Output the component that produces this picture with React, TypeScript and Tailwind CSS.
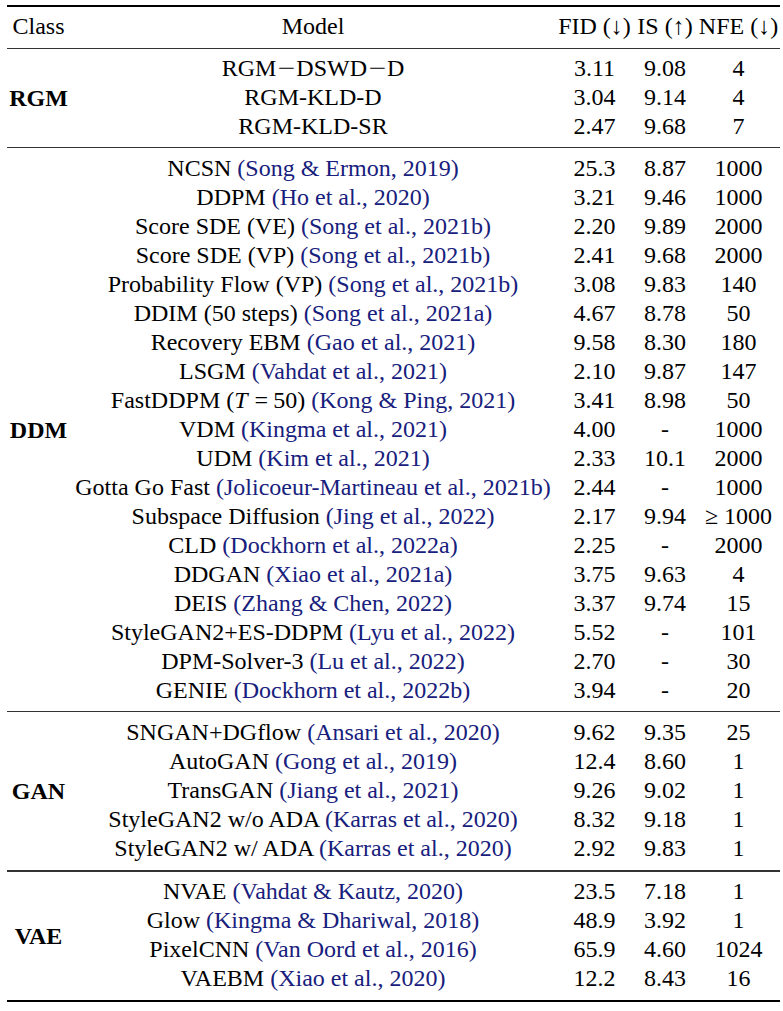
import React from "react";

type Row = { m: React.ReactNode; c?: string; fid: string; is: string; nfe: string };

const Cite = ({ children }: { children: React.ReactNode }) => (
  <span className="text-[#17207c]">({children})</span>
);

const Minus = () => (
  <span className="inline-block w-[17px] mx-[1.5px] text-center scale-x-[1.3]">{"\u2212"}</span>
);

const sections: { label: string; py: string; rowH: string; rows: Row[] }[] = [
  {
    label: "RGM",
    py: "py-[5.5px]",
    rowH: "h-[29px]",
    rows: [
      {
        m: (
          <>
            RGM
            <Minus />
            DSWD
            <Minus />D
          </>
        ),
        fid: "3.11",
        is: "9.08",
        nfe: "4",
      },
      { m: "RGM-KLD-D", fid: "3.04", is: "9.14", nfe: "4" },
      { m: "RGM-KLD-SR", fid: "2.47", is: "9.68", nfe: "7" },
    ],
  },
  {
    label: "DDM",
    py: "py-[6px]",
    rowH: "h-[29px]",
    rows: [
      { m: "NCSN", c: "Song & Ermon, 2019", fid: "25.3", is: "8.87", nfe: "1000" },
      { m: "DDPM", c: "Ho et al., 2020", fid: "3.21", is: "9.46", nfe: "1000" },
      { m: "Score SDE (VE)", c: "Song et al., 2021b", fid: "2.20", is: "9.89", nfe: "2000" },
      { m: "Score SDE (VP)", c: "Song et al., 2021b", fid: "2.41", is: "9.68", nfe: "2000" },
      { m: "Probability Flow (VP)", c: "Song et al., 2021b", fid: "3.08", is: "9.83", nfe: "140" },
      { m: "DDIM (50 steps)", c: "Song et al., 2021a", fid: "4.67", is: "8.78", nfe: "50" },
      { m: "Recovery EBM", c: "Gao et al., 2021", fid: "9.58", is: "8.30", nfe: "180" },
      { m: "LSGM", c: "Vahdat et al., 2021", fid: "2.10", is: "9.87", nfe: "147" },
      {
        m: (
          <>
            FastDDPM (<i className="pr-[2px]">T</i>
            <span className="inline-block mx-[5px]">=</span>50)
          </>
        ),
        c: "Kong & Ping, 2021",
        fid: "3.41",
        is: "8.98",
        nfe: "50",
      },
      { m: "VDM", c: "Kingma et al., 2021", fid: "4.00", is: "-", nfe: "1000" },
      { m: "UDM", c: "Kim et al., 2021", fid: "2.33", is: "10.1", nfe: "2000" },
      { m: "Gotta Go Fast", c: "Jolicoeur-Martineau et al., 2021b", fid: "2.44", is: "-", nfe: "1000" },
      {
        m: "Subspace Diffusion",
        c: "Jing et al., 2022",
        fid: "2.17",
        is: "9.94",
        nfe: "\u2265\u00a01000",
      },
      { m: "CLD", c: "Dockhorn et al., 2022a", fid: "2.25", is: "-", nfe: "2000" },
      { m: "DDGAN", c: "Xiao et al., 2021a", fid: "3.75", is: "9.63", nfe: "4" },
      { m: "DEIS", c: "Zhang & Chen, 2022", fid: "3.37", is: "9.74", nfe: "15" },
      { m: "StyleGAN2+ES-DDPM", c: "Lyu et al., 2022", fid: "5.52", is: "-", nfe: "101" },
      { m: "DPM-Solver-3", c: "Lu et al., 2022", fid: "2.70", is: "-", nfe: "30" },
      { m: "GENIE", c: "Dockhorn et al., 2022b", fid: "3.94", is: "-", nfe: "20" },
    ],
  },
  {
    label: "GAN",
    py: "py-[6.5px]",
    rowH: "h-[29px]",
    rows: [
      { m: "SNGAN+DGflow", c: "Ansari et al., 2020", fid: "9.62", is: "9.35", nfe: "25" },
      { m: "AutoGAN", c: "Gong et al., 2019", fid: "12.4", is: "8.60", nfe: "1" },
      { m: "TransGAN", c: "Jiang et al., 2021", fid: "9.26", is: "9.02", nfe: "1" },
      { m: "StyleGAN2 w/o ADA", c: "Karras et al., 2020", fid: "8.32", is: "9.18", nfe: "1" },
      { m: "StyleGAN2 w/ ADA", c: "Karras et al., 2020", fid: "2.92", is: "9.83", nfe: "1" },
    ],
  },
  {
    label: "VAE",
    py: "py-[6px]",
    rowH: "h-[29px]",
    rows: [
      { m: "NVAE", c: "Vahdat & Kautz, 2020", fid: "23.5", is: "7.18", nfe: "1" },
      { m: "Glow", c: "Kingma & Dhariwal, 2018", fid: "48.9", is: "3.92", nfe: "1" },
      { m: "PixelCNN", c: "Van Oord et al., 2016", fid: "65.9", is: "4.60", nfe: "1024" },
      { m: "VAEBM", c: "Xiao et al., 2020", fid: "12.2", is: "8.43", nfe: "16" },
    ],
  },
];

const gridCols = "grid grid-cols-[486px_77px_64px_83px]";

export default function App() {
  return (
    <div className="w-[783px] h-[1011px] bg-white text-black font-['Liberation_Serif',serif] text-[24px] leading-none">
      <div className="ml-[7px] w-[773px] pt-[5px]">
        <div className="h-[2px] bg-black" />
        <div className="flex h-[40.5px] items-center pb-[2px]">
          <div className="w-[63px] text-center">Class</div>
          <div className={gridCols}>
            <div className="text-center">Model</div>
            <div className="text-center whitespace-nowrap">FID (↓)</div>
            <div className="text-center whitespace-nowrap">IS (↑)</div>
            <div className="text-center whitespace-nowrap">NFE (↓)</div>
          </div>
        </div>
        {sections.map((s, si) => (
          <div key={s.label}>
            <div className="h-[1.3px] bg-[#333]" />
            <div className={`flex items-center ${s.py}`}>
              <div className="w-[63px] text-center font-bold">{s.label}</div>
              <div className="flex flex-col">
                {s.rows.map((r, i) => (
                  <div key={i} className={`${gridCols} ${s.rowH} items-center pb-[2px]`}>
                    <div className="text-center whitespace-nowrap">
                      {r.m}
                      {r.c ? (
                        <>
                          {" "}
                          <Cite>{r.c}</Cite>
                        </>
                      ) : null}
                    </div>
                    <div className="text-center">{r.fid}</div>
                    <div className="text-center">{r.is}</div>
                    <div className="text-center whitespace-nowrap">{r.nfe}</div>
                  </div>
                ))}
              </div>
            </div>
            {si === sections.length - 1 ? <div className="h-[2px] bg-black" /> : null}
          </div>
        ))}
      </div>
    </div>
  );
}
